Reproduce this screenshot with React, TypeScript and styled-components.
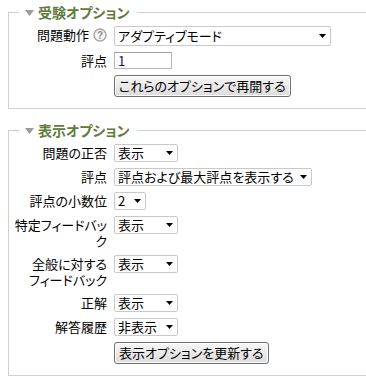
import styled, { createGlobalStyle } from 'styled-components';

const GlobalStyle = createGlobalStyle`
  html, body {
    margin: 0;
    padding: 0;
    background: #fff;
    overflow: hidden;
  }
  body {
    font-family: "Noto Sans CJK JP", "Liberation Sans", sans-serif;
    font-size: 13px;
    color: #000;
  }
`;

const Page = styled.div`
  width: 366px;
  height: 378px;
  overflow: hidden;
  box-sizing: border-box;
  padding: 3px 0 0 8px;
  display: flex;
  flex-direction: column;
  gap: 12px;
  font-feature-settings: "palt";
`;

const Fieldset = styled.fieldset`
  margin: 0 -40px 0 0;
  padding: 5px 0 11px 0;
  border: 1px solid #cfcfcf;
  min-width: 0;
`;

const Legend = styled.legend`
  margin-left: 10px;
  padding: 0 8px 0 6px;
  font-size: 14px;
  font-weight: bold;
  line-height: 18px;
  color: #5f7c3b;
`;

const LegendArrow = styled.svg`
  display: inline-block;
  vertical-align: middle;
  margin: -2px 4px 0 0;
`;

const Row = styled.div`
  display: grid;
  grid-template-columns: 98px auto;
  column-gap: 7px;
  align-items: start;
  margin-bottom: 6px;

  &:last-child {
    margin-bottom: 0;
  }
`;

const Label = styled.label`
  text-align: right;
  line-height: 16px;
  padding-top: 1px;
  line-break: strict;
`;

const HelpIcon = styled.svg`
  display: inline-block;
  vertical-align: middle;
  margin: -2px 0 0 4px;
`;

const Select = styled.div<{ $width: number; $tall?: boolean }>`
  width: ${(p) => p.$width}px;
  height: ${(p) => (p.$tall ? 20 : 18)}px;
  box-sizing: border-box;
  border: 1px solid #c9c9c9;
  border-radius: 2px;
  background: #fff;
  display: flex;
  align-items: center;
  justify-content: space-between;
  padding: 0 4px 0 3px;
  line-height: 16px;
  white-space: nowrap;
  overflow: hidden;
`;

const Arrow = styled.svg`
  flex-shrink: 0;
`;

const TextInput = styled.div`
  width: 58px;
  height: 17px;
  box-sizing: border-box;
  border: 1px solid #b5b5b5;
  border-top-color: #a0a0a0;
  padding: 0 3px;
  line-height: 15px;
  color: #10106e;
`;

const Button = styled.button`
  grid-column: 2;
  justify-self: start;
  height: 22px;
  padding: 0 4px;
  font: inherit;
  font-size: 13px;
  line-height: 18px;
  color: #000;
  border: 1px solid #6f6f6f;
  border-radius: 3px;
  background: linear-gradient(#f7f7f7, #dcdcdc);
  box-shadow: inset 0 0 0 1px #fff;
  white-space: nowrap;
`;

const displayRows = [
  { label: '問題の正否', value: '表示', width: 64 },
  { label: '評点', value: '評点および最大評点を表示する', width: 198 },
  { label: '評点の小数位', value: '2', width: 32 },
  { label: '特定フィードバック', value: '表示', width: 64 },
  { label: '全般に対するフィードバック', value: '表示', width: 64 },
  { label: '正解', value: '表示', width: 64 },
  { label: '解答履歴', value: '非表示', width: 64 },
];

const DropArrow = () => (
  <Arrow width="7" height="4" viewBox="0 0 7 4">
    <path d="M0 0h7L3.5 4z" fill="#000" />
  </Arrow>
);

const FakeSelect = ({ value, width, tall }: { value: string; width: number; tall?: boolean }) => (
  <Select $width={width} $tall={tall}>
    <span>{value}</span>
    <DropArrow />
  </Select>
);

const SectionLegend = ({ title }: { title: string }) => (
  <Legend>
    <LegendArrow width="9" height="6" viewBox="0 0 9 6">
      <path d="M0 0h9L4.5 6z" fill="#9c9c9c" />
    </LegendArrow>
    {title}
  </Legend>
);

const App = () => {
  return (
    <>
      <GlobalStyle />
      <Page lang="ja">
        <Fieldset>
          <SectionLegend title="受験オプション" />
          <Row>
            <Label>
              問題動作
              <HelpIcon width="14" height="14" viewBox="0 0 14 14">
                <circle cx="7" cy="7" r="6" fill="#f6f6f6" stroke="#a8a8a8" strokeWidth="1.5" />
                <text
                  x="7"
                  y="10.5"
                  textAnchor="middle"
                  fontSize="10"
                  fontWeight="bold"
                  fill="#8c8c8c"
                  fontFamily="Liberation Sans, sans-serif"
                >
                  ?
                </text>
              </HelpIcon>
            </Label>
            <FakeSelect value="アダプティブモード" width={217} tall />
          </Row>
          <Row>
            <Label>評点</Label>
            <TextInput>1</TextInput>
          </Row>
          <Row>
            <Button>これらのオプションで再開する</Button>
          </Row>
        </Fieldset>

        <Fieldset>
          <SectionLegend title="表示オプション" />
          {displayRows.map((row) => (
            <Row key={row.label}>
              <Label>{row.label}</Label>
              <FakeSelect value={row.value} width={row.width} />
            </Row>
          ))}
          <Row>
            <Button>表示オプションを更新する</Button>
          </Row>
        </Fieldset>
      </Page>
    </>
  );
};

export default App;
